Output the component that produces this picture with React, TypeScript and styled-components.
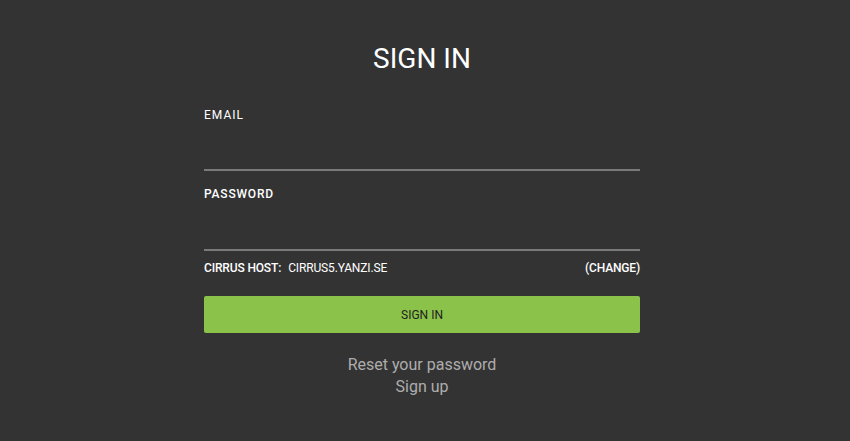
import React from "react";
import styled, { createGlobalStyle } from "styled-components";

const Global = createGlobalStyle`
  html, body { margin: 0; padding: 0; background: #333333; }
  body { font-family: Roboto, "Liberation Sans", sans-serif; }
`;

const Page = styled.div`
  height: 441px;
  background: #333333;
  display: flex;
  justify-content: flex-start;
  padding-left: 204px;
  box-sizing: border-box;
`;

const Form = styled.form`
  width: 436px;
  display: flex;
  flex-direction: column;
`;

const Title = styled.h1`
  margin: 42px 0 0;
  font-size: 28px;
  font-weight: 400;
  color: #ffffff;
  text-align: center;
  line-height: 34px;
`;

const Field = styled.div<{ $top: number }>`
  margin-top: ${(p) => p.$top}px;
  display: flex;
  flex-direction: column;
`;

const Label = styled.label<{ $weight: number }>`
  font-size: 12px;
  font-weight: ${(p) => p.$weight};
  letter-spacing: ${(p) => (p.$weight > 400 ? 0.8 : 1)}px;
  color: #ffffff;
  line-height: 14px;
`;

const Input = styled.input<{ $h: number }>`
  margin-top: 20px;
  height: ${(p) => p.$h}px;
  background: transparent;
  border: none;
  border-bottom: 2px solid #7a7a7a;
  color: #fff;
  font-family: inherit;
  font-size: 14px;
  outline: none;
  padding: 0;
`;

const HostRow = styled.div`
  margin-top: 10px;
  display: flex;
  align-items: center;
  font-size: 12px;
  line-height: 14px;
  color: #ffffff;
  letter-spacing: -0.15px;
`;

const HostLabel = styled.span`
  font-weight: 500;
  margin-right: 7px;
`;

const HostValue = styled.span`
  flex: 1;
`;

const Change = styled.span`
  font-weight: 500;
`;

const Button = styled.button`
  margin-top: 21px;
  height: 37px;
  border: none;
  border-radius: 2px;
  background: #8bc34a;
  color: #222222;
  font-family: inherit;
  font-size: 12px;
  font-weight: 400;
`;

const Links = styled.div`
  margin-top: 21px;
  display: flex;
  flex-direction: column;
  align-items: center;
`;

const Link = styled.a`
  font-size: 16px;
  line-height: 22px;
  color: #adadad;
  text-decoration: none;
`;

export default function App() {
  return (
    <>
      <Global />
      <Page>
        <Form onSubmit={(e) => e.preventDefault()}>
          <Title>SIGN IN</Title>
          <Field $top={32}>
            <Label $weight={400}>EMAIL</Label>
            <Input type="email" $h={27} />
          </Field>
          <Field $top={16}>
            <Label $weight={500}>PASSWORD</Label>
            <Input type="password" $h={28} />
          </Field>
          <HostRow>
            <HostLabel>CIRRUS HOST:</HostLabel>
            <HostValue>CIRRUS5.YANZI.SE</HostValue>
            <Change>(CHANGE)</Change>
          </HostRow>
          <Button type="submit">SIGN IN</Button>
          <Links>
            <Link>Reset your password</Link>
            <Link>Sign up</Link>
          </Links>
        </Form>
      </Page>
    </>
  );
}
